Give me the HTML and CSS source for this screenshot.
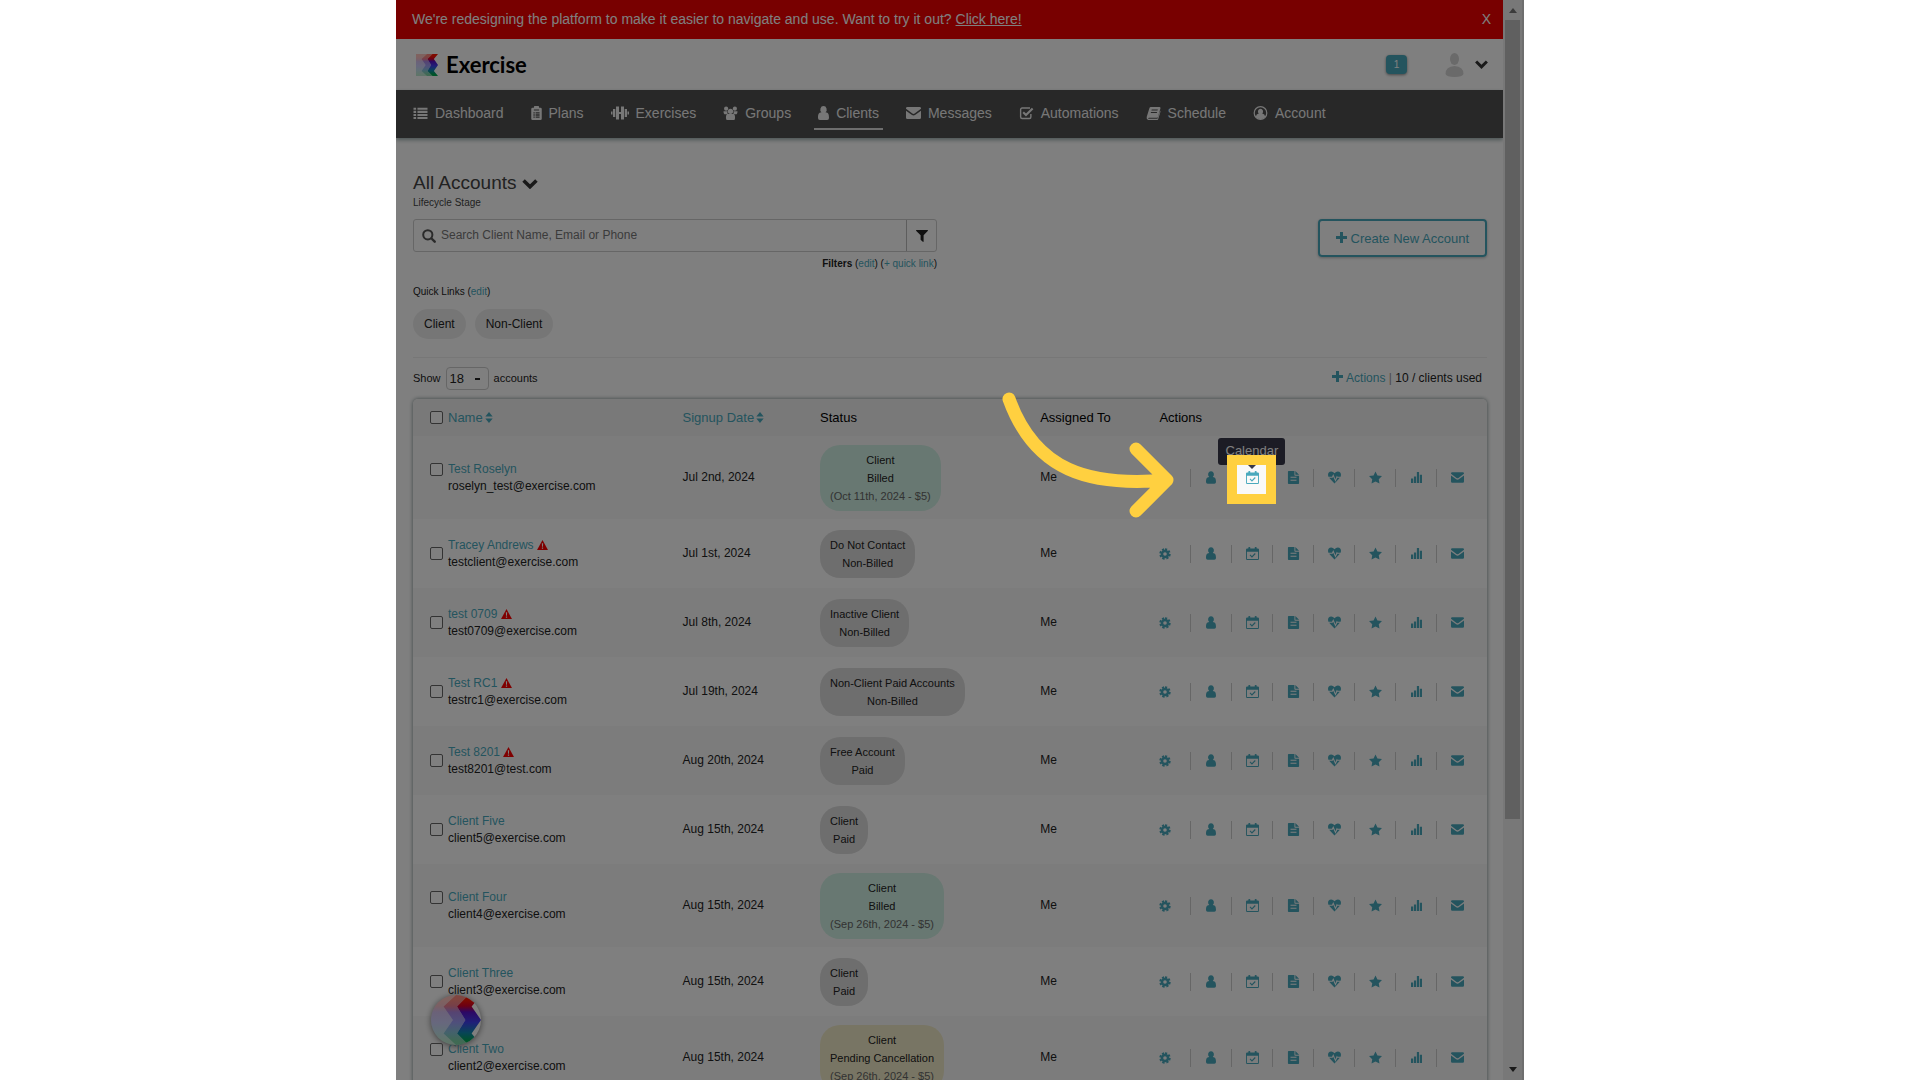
FILE: index.html
```html
<!DOCTYPE html>
<html lang="en">
<head>
<meta charset="utf-8">
<title>Exercise - Clients</title>
<link rel="stylesheet" href="styles.css">
</head>
<body>
<svg width="0" height="0" class="sprite" aria-hidden="true">
  <defs>
    <linearGradient id="spectrum" gradientUnits="userSpaceOnUse" x1="0" y1="0" x2="0" y2="24">
      <stop offset="0.1" stop-color="#ff1500"/><stop offset="0.22" stop-color="#d80028"/><stop offset="0.34" stop-color="#5a10c8"/><stop offset="0.55" stop-color="#3f40f0"/><stop offset="0.75" stop-color="#1088b0"/><stop offset="0.92" stop-color="#00a850"/>
    </linearGradient>
    <symbol id="logo" viewBox="0 0 24 24"><g fill="url(#spectrum)">
      <path opacity=".25" d="M0 0H12L6 5.500L10.500 12L6 18.500L12 24H0Z"/><path opacity=".5" d="M12 0H18L12.500 5.500L16.500 12L12.500 18.500L18 24H12L6 18.500L10.500 12L6 5.500Z"/><path d="M18 0H24L19.500 5.500L24 12L19.500 18.500L24 24H18L12.500 18.500L16.500 12L12.500 5.500Z"/></g></symbol>
    <symbol id="list" viewBox="0 0 16 16"><path d="M0 2h3v2.400H0zM0 5.500h3v2.400H0zM0 9h3v2.400H0zM0 12.500h3v2.400H0zM4.500 2H16v2.400H4.500zM4.500 5.500H16v2.400H4.500zM4.500 9H16v2.400H4.500zM4.500 12.500H16v2.400H4.500z"/></symbol>
    <symbol id="clip" viewBox="0 0 12 16"><path fill-rule="evenodd" d="M1.500 2H3a3 3 0 0 1 6 0h1.500A1.500 1.500 0 0 1 12 3.500v11a1.500 1.500 0 0 1-1.500 1.500h-9A1.500 1.500 0 0 1 0 14.500v-11A1.500 1.500 0 0 1 1.500 2zM3 4v1h6V4zM2.500 7v1.500H4V7zM5 7v1.500h4.500V7zM2.500 9.500V11H4V9.500zM5 9.500V11h4.500V9.500zM2.500 12v1.500H4V12zM5 12v1.500h4.500V12z"/></symbol>
    <symbol id="bell" viewBox="0 0 18 14"><path d="M0 5.500h1.500v3H0zM2 3h2.300v8H2zM5 .5h3v13H5zM8 6h2v2H8zM10 .5h3v13h-3zM13.700 3H16v8h-2.300zM16.500 5.500H18v3h-1.500z"/></symbol>
    <symbol id="group" viewBox="0 0 16 16"><circle cx="3" cy="3" r="2.400"/><circle cx="13" cy="3" r="2.400"/><circle cx="8" cy="6" r="3"/><path d="M0 6h4.500Q4 9 5 9.500H1Q0 9 0 6zM16 6h-4.500Q12 9 11 9.500h4Q16 9 16 6zM3 15Q2 9 5.500 9h5Q14 9 13 15Q12.500 16 11 16H5Q3.500 16 3 15z"/></symbol>
    <symbol id="user" viewBox="0 0 12 15"><path d="M6 0a3.400 3.800 0 0 1 2.200 6.800C11.500 7 12 9.500 12 13Q12 15 10 15H2Q0 15 0 13C0 9.500.5 7 3.800 6.800A3.400 3.800 0 0 1 6 0z"/></symbol>
    <symbol id="mail" viewBox="0 0 16 13"><path d="M1.500 0h13A1.500 1.500 0 0 1 16 1.500V2L9.200 7Q8 7.900 6.800 7L0 2v-.5A1.500 1.500 0 0 1 1.500 0zM0 4l6 4.400q2 1.500 4 0L16 4v7.500a1.500 1.500 0 0 1-1.500 1.500h-13A1.500 1.500 0 0 1 0 11.500z"/></symbol>
    <symbol id="check" viewBox="0 0 16 16"><path fill="none" stroke="currentColor" stroke-width="1.600" d="M13 9v3.500a1.700 1.700 0 0 1-1.700 1.700H3a1.700 1.700 0 0 1-1.700-1.700V4A1.700 1.700 0 0 1 3 2.300h9"/><path fill="none" stroke="currentColor" stroke-width="2.400" d="M4.200 7.200L7.400 10.400L15 2.800"/></symbol>
    <symbol id="book" viewBox="0 0 16 16"><path fill-rule="evenodd" d="M5 1h10q1.300.3 1 1.700L13 12.500q-.4 1-1.500 1H3q-1.300 0-1 1h10.500L15.700 5q.5 1.200 0 2.500L13.300 15q-.4 1-1.500 1H2Q-.3 15.500.2 12.500L3.300 2.600Q3.700 1 5 1zM6 4l-.4 1.200h7L13 4zM5.200 6.800L4.800 8h7l.4-1.200z"/></symbol>
    <symbol id="account" viewBox="0 0 16 16"><circle cx="8" cy="8" r="7.200" fill="none" stroke="currentColor" stroke-width="1.400"/><path d="M8 3a3 3.300 0 0 1 2 5.700q3 .4 3.400 3.500Q11.500 15 8 15t-5.400-2.800Q3 9.100 6 8.700A3 3.300 0 0 1 8 3z"/></symbol>
    <symbol id="chevron" viewBox="0 0 14 9"><path fill="none" stroke="currentColor" stroke-width="3.200" d="M1.200 1.300L7 7L12.800 1.300"/></symbol>
    <symbol id="search" viewBox="0 0 14 14"><circle cx="5.800" cy="5.800" r="4.600" fill="none" stroke="currentColor" stroke-width="2"/><path stroke="currentColor" stroke-width="2.400" stroke-linecap="round" d="M9.500 9.500L12.700 12.700"/></symbol>
    <symbol id="funnel" viewBox="0 0 12 12"><path d="M.3 0h11.400q.5.400 0 1L7.600 5.200V11.500q-.2.700-.8.300L4.600 9.800V5.200L.3 1Q-.2.400.3 0z"/></symbol>
    <symbol id="plus" viewBox="0 0 11 11"><path d="M4 0h3v4h4v3H7v4H4V7H0V4h4z"/></symbol>
    <symbol id="sort" viewBox="0 0 8 12"><path d="M4 0L8 5H0zM4 12L0 7h8z"/></symbol>
    <symbol id="warn" viewBox="0 0 12 11"><path d="M6 0L12 11H0z"/><path fill="#fff" d="M5.300 3.500h1.400L6.500 7.500h-1zM5.300 8.300h1.400v1.400H5.300z"/></symbol>
    <symbol id="gear" viewBox="0 0 14 14"><path fill="none" stroke="currentColor" stroke-width="2.400" stroke-dasharray="2.500 1.820" d="M7 1.500a5.500 5.500 0 1 1-.01 0z"/><circle cx="7" cy="7" r="3.600" fill="none" stroke="currentColor" stroke-width="3"/></symbol>
    <symbol id="cal" viewBox="0 0 14 14"><path fill-rule="evenodd" d="M1.300 1.500H2.500V.6q.1-.6.800-.6h.6q.7 0 .7.600v.9h4.800V.6q0-.6.700-.6h.6q.7 0 .8.600v.9h1.200q1.300.1 1.300 1.200v10q0 1.300-1.300 1.300H1.300Q0 14 0 12.700v-10q0-1.100 1.300-1.200zM1 5v8h12V5z"/><path fill="none" stroke="currentColor" stroke-width="1.200" d="M4.300 8.500L6.400 10.600L10 7"/></symbol>
    <symbol id="doc" viewBox="0 0 12 14"><path fill-rule="evenodd" d="M.8 0H7v4.200q0 .8.800.8H12v8.200q0 .8-.8.800H.8Q0 14 0 13.200V.8Q0 0 .8 0zM8 0l4 4H8zM2.800 6.300v1h6.400v-1zM2.800 9.500v1h6.400v-1z"/></symbol>
    <symbol id="heart" viewBox="0 0 14 13"><path d="M7 2Q8.500 0 10.600 0Q14 .3 14 3.800L13.600 5.800H10.300L9.500 4.600L8 8.500L5.700 2.800L4.300 5.800H.4L0 3.800Q0 .3 3.400 0Q5.500 0 7 2zM1.200 6.900H5L5.700 5.600L8 11L10 6.900h2.800L7 12.900z"/></symbol>
    <symbol id="star" viewBox="0 0 14 13"><path d="M7 0L9.100 4.300L14 5L10.500 8.300L11.300 13L7 10.800L2.700 13L3.500 8.300L0 5L4.900 4.300z"/></symbol>
    <symbol id="bars" viewBox="0 0 12 12"><path d="M0 7h2.400v5H0zM3.200 5h2.400v7H3.200zM6.400 0h2.400v12H6.400zM9.600 3H12v9H9.600z"/></symbol>
    <symbol id="person" viewBox="0 0 18 24"><ellipse cx="9" cy="6" rx="4.500" ry="6"/><path d="M9 13q9 .5 9 8-1 3-9 3t-9-3q0-7.500 9-8z"/></symbol>
  </defs>
</svg>
<div class="app">
  <div class="page">
    <div class="banner"><p>We're redesigning the platform to make it easier to navigate and use. Want to try it out? <a href="#">Click here!</a></p><button type="button" aria-label="Close">X</button></div>
    <header class="brandbar">
      <a class="brand" href="#"><svg class="i-logo"><use href="#logo"/></svg>Exercise</a>
      <div class="tools"><a class="count" href="#">1</a><button type="button" class="profile" aria-label="Profile"><svg class="i-person"><use href="#person"/></svg><svg class="i-chev"><use href="#chevron"/></svg></button></div>
    </header>
    <nav class="nav">
      <a href="#"><svg class="w15"><use href="#list"/></svg>Dashboard</a>
      <a href="#"><svg class="w12"><use href="#clip"/></svg>Plans</a>
      <a href="#"><svg class="w18"><use href="#bell"/></svg>Exercises</a>
      <a href="#"><svg class="w15"><use href="#group"/></svg>Groups</a>
      <a href="#" class="active"><svg class="w12"><use href="#user"/></svg>Clients</a>
      <a href="#"><svg class="w15"><use href="#mail"/></svg>Messages</a>
      <a href="#"><svg class="w15"><use href="#check"/></svg>Automations</a>
      <a href="#"><svg class="w15"><use href="#book"/></svg>Schedule</a>
      <a href="#"><svg class="w15"><use href="#account"/></svg>Account</a>
    </nav>
    <main>
      <h1>All Accounts <svg class="i-chev big"><use href="#chevron"/></svg></h1>
      <p class="stage">Lifecycle Stage</p>
      <div class="finder">
        <div class="search-col">
          <div class="search"><svg class="i-search"><use href="#search"/></svg><input type="text" aria-label="Search clients" placeholder="Search Client Name, Email or Phone"><button type="button" aria-label="Filter"><svg class="i-funnel"><use href="#funnel"/></svg></button></div>
          <p class="filters"><b>Filters</b> (<a href="#">edit</a>) (<a href="#">+ quick link</a>)</p>
        </div>
        <button type="button" class="create"><svg class="i-plus"><use href="#plus"/></svg> Create New Account</button>
      </div>
      <p class="quick">Quick Links (<a href="#">edit</a>)</p>
      <div class="chips"><button type="button">Client</button><button type="button">Non-Client</button></div>
      <div class="listbar">
        <label for="n">Show</label><select id="n"><option>18</option></select><span>accounts</span>
        <p class="usage"><a href="#"><svg class="i-plus"><use href="#plus"/></svg> Actions</a> <i>|</i> 10 / clients used</p>
      </div>
      <table class="clients">
        <thead><tr><th class="c-name"><div class="who"><input type="checkbox" aria-label="Select all"><a href="#">Name<svg class="i-sort"><use href="#sort"/></svg></a></div></th><th class="c-date"><a href="#">Signup Date<svg class="i-sort"><use href="#sort"/></svg></a></th><th class="c-status">Status</th><th class="c-to">Assigned To</th><th>Actions</th></tr></thead>
        <tbody id="rows"></tbody>
      </table>
    </main>
    <button type="button" class="helper" aria-label="Help"><svg><use href="#logo"/></svg></button>
  </div>
  <div class="scroll" aria-hidden="true"><span class="up"></span><span class="thumb"></span><span class="down"></span></div>
</div>
<script src="rows.js"></script>
</body>
</html>
```
FILE: rows.js
```js
const clients = [
  ["Test Roselyn", "roselyn_test@exercise.com", "Jul 2nd, 2024", "green", ["Client", "Billed", "(Oct 11th, 2024 - $5)"]],
  ["Tracey Andrews", "testclient@exercise.com", "Jul 1st, 2024", "gray", ["Do Not Contact", "Non-Billed"], true],
  ["test 0709", "test0709@exercise.com", "Jul 8th, 2024", "gray", ["Inactive Client", "Non-Billed"], true],
  ["Test RC1", "testrc1@exercise.com", "Jul 19th, 2024", "gray", ["Non-Client Paid Accounts", "Non-Billed"], true],
  ["Test 8201", "test8201@test.com", "Aug 20th, 2024", "gray", ["Free Account", "Paid"], true],
  ["Client Five", "client5@exercise.com", "Aug 15th, 2024", "gray", ["Client", "Paid"]],
  ["Client Four", "client4@exercise.com", "Aug 15th, 2024", "green", ["Client", "Billed", "(Sep 26th, 2024 - $5)"]],
  ["Client Three", "client3@exercise.com", "Aug 15th, 2024", "gray", ["Client", "Paid"]],
  ["Client Two", "client2@exercise.com", "Aug 15th, 2024", "yellow", ["Client", "Pending Cancellation", "(Sep 26th, 2024 - $5)"]]
];
const actions = [["gear", "Settings"], ["user", "Profile"], ["cal", "Calendar"], ["doc", "Notes"], ["heart", "Health"], ["star", "Favorite"], ["bars", "Reports"], ["mail", "Message"]];
const icon = (name) => `<svg class="a-${name}"><use href="#${name}"/></svg>`;
const tour = `<span class="tip">Calendar</span><span class="spot"></span><svg class="arrow" viewBox="0 0 180 130"><path d="M10 10C36 82 90 98 168 91M137 60L168 91L137 122"/></svg>`;

document.getElementById("rows").innerHTML = clients.map(([name, mail, date, tone, lines, warn], n) => `
  <tr class="${lines.length > 2 ? "tall" : ""}">
    <td><div class="who"><input type="checkbox" aria-label="Select ${name}"><div><a href="#">${name}</a>${warn ? ` <svg class="i-warn"><use href="#warn"/></svg>` : ""}<br>${mail}</div></div></td>
    <td>${date}</td>
    <td><div class="pill ${tone}">${lines.map((t) => `<span>${t}</span>`).join("")}</div></td>
    <td>Me</td>
    <td><div class="actions">${actions.map(([id, label]) => `<div><a href="#" aria-label="${label}">${icon(id)}</a>${n === 0 && id === "cal" ? tour : ""}</div>`).join("")}</div></td>
  </tr>`).join("");
```
FILE: styles.css
```css
* { box-sizing: border-box; }
body { margin: 0; background: #fff; font: 13px/17px "Liberation Sans", Arial, sans-serif; color: #222; }
p, h1 { margin: 0; }
a { color: #49a9bd; text-decoration: none; }
button { font: inherit; color: inherit; background: none; border: 0; padding: 0; }
svg { fill: currentColor; }
.sprite { position: absolute; }

.app { position: relative; display: flex; width: 58.75%; height: 100vh; margin: 0 auto; overflow: hidden; }
.page { flex: 1; min-width: 0; background: #fff; }

.banner { display: flex; justify-content: space-between; align-items: center; height: 39px; padding: 0 12px 0 16px; background: #f00000; color: #fff; font-size: 14px; }
.banner a { color: #fff; text-decoration: underline; }
.brandbar { display: flex; justify-content: space-between; align-items: center; height: 51px; padding: 0 15px 0 20px; }
.brand { display: flex; align-items: center; gap: 8px; color: #000; font: 700 22px/28px Lato, sans-serif; }
.i-logo { width: 22px; height: 24px; }
.tools { display: flex; align-items: center; gap: 38px; }
.count { width: 21px; height: 19px; border-radius: 4px; background: #49a9bd; color: #fff; font-size: 10px; line-height: 19px; text-align: center; box-shadow: 0 1px 3px #888; }
.profile { display: flex; align-items: center; gap: 11px; }
.i-person { width: 19px; height: 24px; color: #d4d4d4; }
.i-chev { width: 13px; height: 9px; color: #333; }
.nav { display: flex; gap: 19px; height: 48px; padding: 0 13px; background: #505050; box-shadow: 0 2px 4px #9aa; }
.nav a { display: flex; align-items: center; height: 40px; padding: 8px 4px 0; color: #eee; font-size: 14px; border-bottom: 2px solid transparent; gap: 7px; }
.nav .active { border-color: #ddd; }
.nav svg { height: 14px; }
.w12 { width: 11px; }
.w15 { width: 15px; }
.w18 { width: 18px; }

main { padding: 33px 16px 0 17px; }
h1 { font-size: 19px; line-height: 24px; font-weight: 400; color: #444; }
.i-chev.big { width: 16px; height: 10px; }
.stage { font-size: 10px; line-height: 16px; color: #444; }
.finder { display: flex; justify-content: space-between; align-items: flex-start; margin-top: 8px; }
.search-col { width: 524px; }
.search { display: flex; align-items: center; height: 33px; border: 1px solid #ccc; border-radius: 3px; padding-left: 8px; gap: 3px; }
.search input { flex: 1; border: 0; outline: 0; background: none; font: 12px/17px "Liberation Sans", Arial, sans-serif; color: #333; }
.search input::placeholder { color: #777; }
.search button { width: 30px; height: 100%; border-left: 1px solid #bbb; }
.i-search { width: 14px; height: 14px; color: #555; }
.i-funnel { width: 12px; height: 12px; color: #222; display: block; margin: 0 auto; }
.filters { font-size: 10px; line-height: 12px; margin-top: 6px; text-align: right; }
.create { height: 38px; width: 169px; color: #49a9bd; border: 2px solid #49a9bd; border-radius: 4px; box-shadow: 0 1px 3px #bbb; }
.i-plus { width: 11px; height: 11px; }
.quick { font-size: 10px; line-height: 12px; margin-top: 16px; }
.chips { display: flex; gap: 9px; margin-top: 11px; padding-bottom: 18px; border-bottom: 1px solid #eee; }
.chips button { height: 30px; padding: 0 11px; border-radius: 15px; background: #ededed; font-size: 12px; }
.listbar { display: flex; align-items: center; gap: 5px; height: 41px; font-size: 11px; }
.listbar select { appearance: none; width: 43px; height: 23px; padding: 0 3px; border: 1px solid #ccc; border-radius: 4px; font: 13px/17px "Liberation Sans", Arial, sans-serif; color: #222; background: linear-gradient(#222, #222) no-repeat 28px 10px / 5px 2px; }
.usage { margin-left: auto; padding-right: 5px; font-size: 12px; }
.usage i { color: #999; font-style: normal; }

.clients { width: 100%; table-layout: fixed; border-collapse: collapse; border-radius: 5px; box-shadow: 0 0 4px #788; }
th { height: 37px; padding: 0; background: #f2f2f2; text-align: left; font-weight: 400; color: #000; }
th:first-child { border-radius: 5px 0 0 0; }
th:last-child { border-radius: 0 5px 0 0; }
.c-name { width: 25.1%; }
.c-date { width: 12.8%; }
.c-status { width: 20.5%; }
.c-to { width: 11.1%; }
td { height: 69px; padding: 0; font-size: 12px; }
.tall td { height: 83px; }
tbody tr { background: #fff; }
tbody tr:nth-child(odd) { background: #f9f9f9; }
.who { display: flex; align-items: center; gap: 5px; padding-left: 17px; }
.tall .who { align-items: flex-start; }
.who input { appearance: none; width: 13px; height: 13px; margin: 2px 0; border: 1px solid #666; border-radius: 2px; background: #fff; }
.i-sort { width: 8px; height: 11px; margin-left: 2px; vertical-align: -1px; }
.i-warn { width: 11px; height: 10px; color: #f00; vertical-align: -1px; }
.pill { display: inline-block; padding: 6px 10px; border-radius: 20px; font-size: 11px; line-height: 18px; text-align: center; vertical-align: middle; }
.pill span { display: block; }
.gray { background: #ddd; }
.green { background: #d0f0e4; }
.yellow { background: #f1ebc8; }
.pill:not(.gray) span:nth-child(3) { color: #666; }
.actions { display: flex; align-items: center; }
.actions div { position: relative; display: flex; align-items: center; justify-content: center; width: 41px; height: 18px; border-left: 1px solid #ccc; }
.actions div:first-child { width: 31px; justify-content: flex-start; border: 0; }
.actions a { display: flex; color: #49a9bd; }
.actions svg { width: 13px; height: 13px; }
.actions .a-user { width: 10px; }
.actions .a-gear { width: 12px; height: 12px; }
.actions .a-bars { height: 11px; }

.tip { position: absolute; left: -14px; top: -31px; width: 67px; height: 27px; background: #38394a; color: #fff; font-size: 13px; border-radius: 3px; text-align: center; line-height: 26px; }
.tip::after { content: ""; position: absolute; left: 30px; top: 27px; border: 4px solid transparent; border-top-color: #38394a; }
/* the ring dims everything in the app outside the highlighted control */
.spot { position: absolute; z-index: 5; left: 5px; top: -4px; width: 29px; height: 29px; box-shadow: 0 0 0 10px #ffd040, 0 0 0 3000px rgba(0, 0, 0, .5); pointer-events: none; }
.actions .arrow { position: absolute; z-index: 6; left: -233px; top: -80px; width: 180px; height: 130px; fill: none; stroke: #ffd040; stroke-width: 13; stroke-linecap: round; stroke-linejoin: round; pointer-events: none; }

.helper { position: absolute; left: 35px; bottom: 35px; width: 50px; height: 50px; border-radius: 50%; overflow: hidden; background: #fff; box-shadow: 0 1px 6px #777; }
.helper svg { display: block; width: 50px; height: 50px; }

.scroll { display: flex; flex-direction: column; align-items: center; width: 21px; background: #f1f1f1; border-right: 2px solid #ddd; }
.up, .down { border: 4px solid transparent; }
.up { border-bottom: 5px solid #777; margin-top: 4px; }
.thumb { flex: 0 0 74%; width: 15px; margin-top: 7px; background: #c1c1c1; }
.down { border-top: 5px solid #333; margin: auto 0 4px; }
```
